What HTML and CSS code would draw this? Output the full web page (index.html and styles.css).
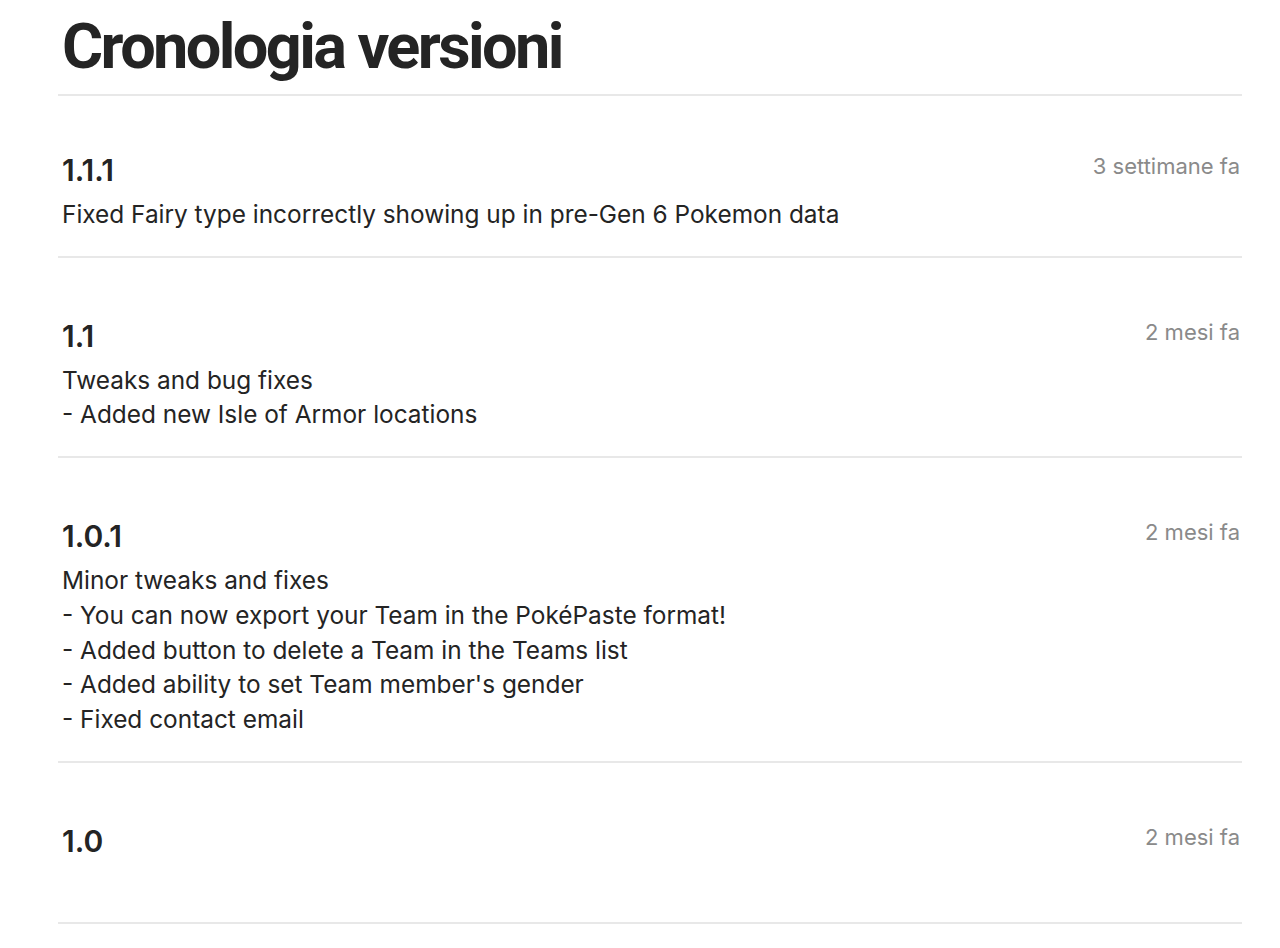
FILE: index.html
```html
<!DOCTYPE html>
<html lang="it">
<head>
<meta charset="utf-8">
<title>Cronologia versioni</title>
<link rel="stylesheet" href="styles.css">
</head>
<body>
<main class="page">
  <h1 class="title">Cronologia versioni</h1>
  <section class="release release--first">
    <div class="release-head">
      <h4 class="version">1.1.1</h4>
      <time class="date">3 settimane fa</time>
    </div>
    <p class="notes">Fixed Fairy type incorrectly showing up in pre-Gen 6 Pokemon data</p>
  </section>
  <section class="release">
    <div class="release-head">
      <h4 class="version">1.1</h4>
      <time class="date">2 mesi fa</time>
    </div>
    <p class="notes">Tweaks and bug fixes<br>- Added new Isle of Armor locations</p>
  </section>
  <section class="release">
    <div class="release-head">
      <h4 class="version">1.0.1</h4>
      <time class="date">2 mesi fa</time>
    </div>
    <p class="notes">Minor tweaks and fixes<br>- You can now export your Team in the PokéPaste format!<br>- Added button to delete a Team in the Teams list<br>- Added ability to set Team member's gender<br>- Fixed contact email</p>
  </section>
  <section class="release release--bare">
    <div class="release-head">
      <h4 class="version">1.0</h4>
      <time class="date">2 mesi fa</time>
    </div>
  </section>
</main>
</body>
</html>
```
FILE: styles.css
```css
html, body {
  margin: 0;
  padding: 0;
  background: #ffffff;
}

body {
  font-family: Inter, "Noto Sans", "Liberation Sans", sans-serif;
  color: #242424;
}

.page {
  width: 1184px;
  margin-left: 58px;
  display: flex;
  flex-direction: column;
}

.title {
  margin: 0;
  padding: 16px 4px 16px;
  font-family: Roboto, Inter, "Liberation Sans", sans-serif;
  font-size: 63px;
  line-height: 62px;
  font-weight: 700;
  letter-spacing: -2.6px;
  border-bottom: 2px solid #e8e8e8;
}

.release {
  padding: 60px 2px 24px 4px;
  border-bottom: 2px solid #e8e8e8;
}

.release--first {
  padding-top: 56px;
}

.release--bare {
  padding-bottom: 63px;
}

.release-head {
  display: flex;
  justify-content: space-between;
  align-items: flex-start;
}

.version {
  margin: 0;
  font-size: 30px;
  line-height: 36px;
  font-weight: 600;
}

.date {
  font-size: 22px;
  line-height: 28px;
  color: #8a8a8a;
}

.notes {
  margin: 9px 0 0;
  font-size: 24.4px;
  line-height: 34.7px;
}
```
